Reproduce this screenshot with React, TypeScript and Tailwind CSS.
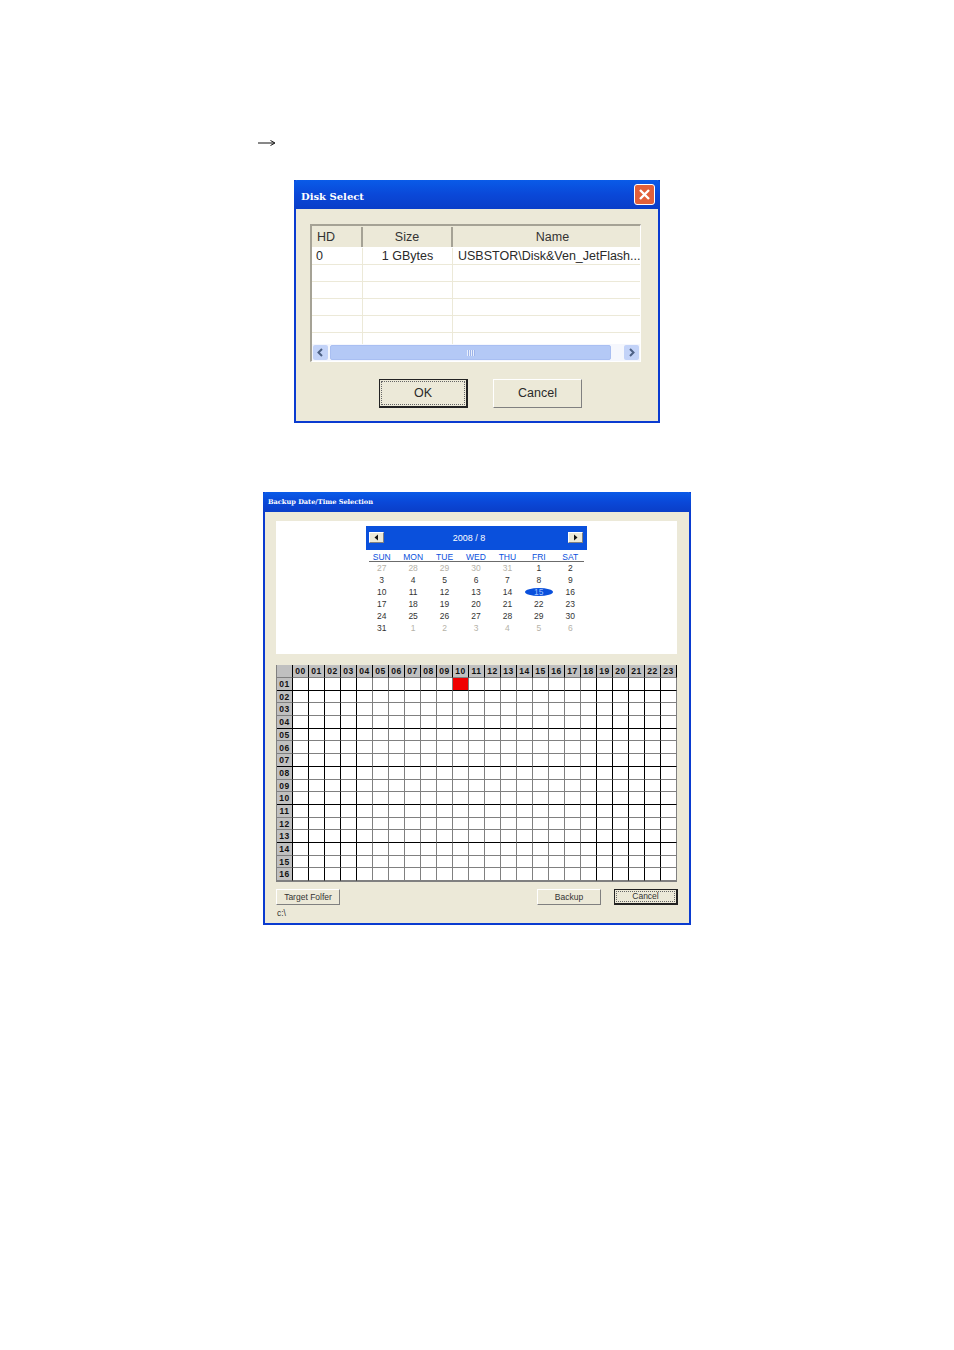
const DAYS = ["SUN", "MON", "TUE", "WED", "THU", "FRI", "SAT"];
const WEEKS: [string, boolean][][] = [
  [["27", true], ["28", true], ["29", true], ["30", true], ["31", true], ["1", false], ["2", false]],
  [["3", false], ["4", false], ["5", false], ["6", false], ["7", false], ["8", false], ["9", false]],
  [["10", false], ["11", false], ["12", false], ["13", false], ["14", false], ["15", false], ["16", false]],
  [["17", false], ["18", false], ["19", false], ["20", false], ["21", false], ["22", false], ["23", false]],
  [["24", false], ["25", false], ["26", false], ["27", false], ["28", false], ["29", false], ["30", false]],
  [["31", false], ["1", true], ["2", true], ["3", true], ["4", true], ["5", true], ["6", true]],
];
const pad = (n: number) => String(n).padStart(2, "0");
const HOURS = Array.from({ length: 24 }, (_, i) => i);
const ROWS = Array.from({ length: 16 }, (_, i) => i);

function Button({ label, focus, className }: { label: string; focus?: boolean; className: string }) {
  return (
    <div
      className={`flex items-center justify-center bg-[#ece9d8] ${
        focus
          ? "border border-r-2 border-b-2 border-[#222] p-[1px]"
          : "border border-t-white border-l-white border-r-[#808080] border-b-[#808080]"
      } ${className}`}
    >
      {focus ? (
        <div className="flex h-full w-full items-center justify-center border border-dotted border-[#666]">{label}</div>
      ) : (
        label
      )}
    </div>
  );
}

function DiskSelect() {
  const blank = [0, 1, 2, 3];
  return (
    <div className="ml-[294px] mt-[32px] h-[243px] w-[366px] border-2 border-t-0 border-[#0a3bd0] bg-[#ece9d8] font-['Liberation_Sans',sans-serif] text-[12.5px] text-[#2a2a2a]">
      <div className="-mx-[2px] flex h-[29px] items-center justify-between rounded-t-[3px] bg-gradient-to-b from-[#0a5be8] via-[#0a48d8] to-[#0a3ec8] pl-[7px] pr-[5px]">
        <span className="pt-[3px] font-['DejaVu_Serif',serif] text-[10px] font-bold text-white">Disk Select</span>
        <span className="flex h-[21px] w-[21px] items-center justify-center rounded-[3px] border border-white bg-[#e2603a]">
          <svg width="13" height="13" viewBox="0 0 13 13">
            <path d="M2 2 L11 11 M11 2 L2 11" stroke="#fff" strokeWidth="2.4" />
          </svg>
        </span>
      </div>
      <div className="ml-[14px] mt-[15px] h-[138px] w-[331px] border border-t-2 border-l-2 border-[#a5a295] border-r-white border-b-white bg-white">
        <div className="flex h-[21px] bg-[#ece9d8] pt-[1px] text-[#333]">
          <div className="flex w-[51px] shrink-0 items-center border-r-2 border-r-[#a5a295] pl-[5px]">HD</div>
          <div className="flex w-[90px] shrink-0 items-center justify-center border-r-2 border-r-[#a5a295]">Size</div>
          <div className="flex flex-1 items-center justify-center pl-[12px]">Name</div>
        </div>
        <div className="flex h-[18px] items-center border-b border-[#ece9d8] pt-[1px]">
          <div className="flex h-full w-[51px] shrink-0 items-center border-r border-[#ece9d8] pl-[4px]">0</div>
          <div className="flex h-full w-[90px] shrink-0 items-center justify-center border-r border-[#ece9d8]">1 GBytes</div>
          <div className="min-w-0 flex-1 whitespace-nowrap pl-[5px]">USBSTOR\Disk&amp;Ven_JetFlash...</div>
        </div>
        {blank.map((i) => (
          <div key={i} className="flex h-[17px] border-b border-[#ece9d8]">
            <div className="w-[51px] shrink-0 border-r border-[#ece9d8]" />
            <div className="w-[90px] shrink-0 border-r border-[#ece9d8]" />
          </div>
        ))}
        <div className="flex h-[11px]">
          <div className="w-[51px] shrink-0 border-r border-[#ece9d8]" />
          <div className="w-[90px] shrink-0 border-r border-[#ece9d8]" />
        </div>
        <div className="flex h-[17px] items-center bg-[#f5f7fd] px-[1px]">
          <span className="flex h-[15px] w-[15px] items-center justify-center rounded-[2px] bg-[#c3d3f8]">
            <svg width="9" height="9" viewBox="0 0 9 9"><path d="M6 1 L2.5 4.5 L6 8" fill="none" stroke="#4d6185" strokeWidth="2" /></svg>
          </span>
          <span className="ml-[2px] flex h-[15px] w-[281px] items-center justify-center rounded-[2px] border border-[#a9bff2] bg-[#b4c9f6]">
            <span className="h-[6px] w-[8px] bg-[repeating-linear-gradient(90deg,#e8eefc_0,#e8eefc_1px,#9db4ea_1px,#9db4ea_2px)]" />
          </span>
          <span className="ml-auto flex h-[15px] w-[15px] items-center justify-center rounded-[2px] bg-[#c3d3f8]">
            <svg width="9" height="9" viewBox="0 0 9 9"><path d="M3 1 L6.5 4.5 L3 8" fill="none" stroke="#4d6185" strokeWidth="2" /></svg>
          </span>
        </div>
      </div>
      <div className="mt-[17px] flex">
        <Button label="OK" focus className="ml-[83px] h-[29px] w-[89px]" />
        <Button label="Cancel" className="ml-[25px] h-[29px] w-[89px]" />
      </div>
    </div>
  );
}

function hLine(r: number) {
  return r % 3 === 0 && r < 15 ? "border-b-black" : "border-b-[#808080]";
}
function vLine(h: number) {
  return h <= 3 || (h >= 18 && h <= 22) ? "border-r-black" : "border-r-[#808080]";
}

function BackupWindow() {
  return (
    <div className="ml-[263px] mt-[69px] h-[433px] w-[428px] border-2 border-t-0 border-[#0a3bd0] bg-[#ece9d8] font-['Liberation_Sans',sans-serif] text-[8.5px] text-[#333]">
      <div className="-mx-[2px] flex h-[20px] items-center rounded-t-[3px] bg-gradient-to-b from-[#0a5be8] via-[#0a48d8] to-[#0a3ec8] pl-[5px]">
        <span className="pt-[2px] font-['DejaVu_Serif',serif] text-[6.6px] font-bold text-white">Backup Date/Time Selection</span>
      </div>
      <div className="ml-[11px] mt-[9px] h-[133px] w-[401px] bg-white pt-[5px]">
        <div className="ml-[90px] flex h-[24px] w-[221px] items-center justify-between bg-[#0a50dc] px-[3px] text-[9px] text-white">
          <span className="-mt-[1px] flex h-[11px] w-[15px] items-center justify-center border border-r-[#808080] border-b-[#808080] border-t-white border-l-white bg-[#ece9d8]">
            <svg width="5" height="7" viewBox="0 0 5 7"><path d="M4 0.5 V6.5 L0.5 3.5 Z" fill="#111" /></svg>
          </span>
          <span className="mr-[14px] pt-[1px]">2008 / 8</span>
          <span className="-mt-[1px] mr-[1px] flex h-[11px] w-[15px] items-center justify-center border border-r-[#808080] border-b-[#808080] border-t-white border-l-white bg-[#ece9d8]">
            <svg width="5" height="7" viewBox="0 0 5 7"><path d="M1 0.5 V6.5 L4.5 3.5 Z" fill="#111" /></svg>
          </span>
        </div>
        <div className="ml-[90px] w-[220px]">
          <div className="ml-[3px] h-[12px] w-[215px] border-b border-[#6b6b6b]" />
          <div className="-mt-[12px] grid h-[12px] grid-cols-7 items-end text-[#0a50dc]">
            {DAYS.map((d) => (
              <div key={d} className="text-center leading-[10px]">{d}</div>
            ))}
          </div>
        </div>
        <div className="ml-[90px] grid w-[220px] grid-cols-7">
          {WEEKS.flat().map(([d, muted], i) => (
            <div key={i} className={`flex h-[12px] items-center justify-center ${muted ? "text-[#b5b2a8]" : "text-[#333]"}`}>
              {d === "15" && !muted ? (
                <span className="flex h-[8px] w-[28px] items-center justify-center rounded-[50%] bg-[#0a50dc] text-[#9cc0ff]">15</span>
              ) : (
                d
              )}
            </div>
          ))}
        </div>
      </div>
      <div className="ml-[11px] mt-[11px] grid w-[401px] grid-cols-[16px_repeat(24,16px)] grid-rows-[13px_repeat(16,12.7px)] border-b border-l border-[#808080] bg-white text-[8.5px] font-bold leading-none tracking-[0.6px] text-[#111]">
        <div className="border-r border-b border-r-black border-b-[#808080] bg-[#c0c0c0]" />
        {HOURS.map((h) => (
          <div key={h} className="flex items-center justify-center border-r border-b border-r-black border-b-[#808080] bg-[#c0c0c0] pt-[1px]">
            {pad(h)}
          </div>
        ))}
        {ROWS.map((r) => [
          <div key={`l${r}`} className={`flex items-center justify-center border-r border-b border-r-black bg-[#c0c0c0] pt-[1px] ${hLine(r)}`}>
            {pad(r + 1)}
          </div>,
          ...HOURS.map((h) => (
            <div
              key={`${r}-${h}`}
              className={`border-r border-b ${vLine(h)} ${hLine(r)} ${r === 0 && h === 10 ? "bg-[#f00000]" : ""}`}
            />
          )),
        ])}
      </div>
      <div className="mt-[7px] flex items-start text-[8.5px]">
        <Button label="Target Folfer" className="ml-[11px] h-[16px] w-[64px]" />
        <Button label="Backup" className="ml-[197px] h-[16px] w-[64px]" />
        <Button label="Cancel" focus className="ml-[13px] h-[16px] w-[64px]" />
      </div>
      <div className="ml-[12px] mt-[2px] text-[8.5px] leading-[12px]">c:\</div>
    </div>
  );
}

export default function App() {
  return (
    <div className="h-[1350px] w-[954px] overflow-hidden bg-white pt-[138px]">
      <div className="ml-[258px] h-[10px] w-[18px]">
        <svg width="18" height="10" viewBox="0 0 18 10">
          <path d="M0 5 H16 M12.5 2.5 L17 5 L12.5 7.5" fill="none" stroke="#111" strokeWidth="1" />
        </svg>
      </div>
      <DiskSelect />
      <BackupWindow />
    </div>
  );
}
